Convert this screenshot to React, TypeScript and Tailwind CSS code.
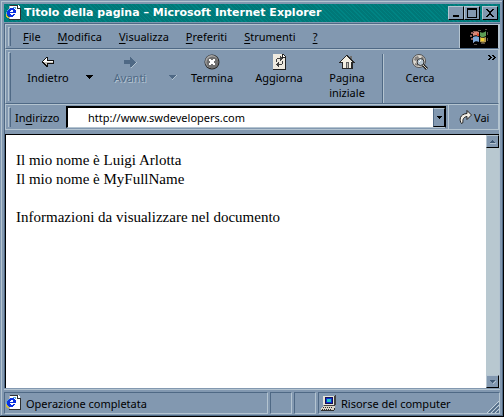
import React from 'react';

const menus = [
  { key: 'F', rest: 'ile' },
  { key: 'M', rest: 'odifica' },
  { key: 'V', rest: 'isualizza' },
  { key: 'P', rest: 'referiti' },
  { key: 'S', rest: 'trumenti' },
  { key: '?', rest: '' },
];

function PageIcon({ className = '' }: { className?: string }) {
  return (
    <svg width="16" height="16" viewBox="0 0 16 16" shapeRendering="crispEdges" className={`shrink-0 ${className}`} aria-hidden="true">
      <path d="M4 0h8l2 2v13H4z" fill="#fff" />
      <path d="M4 0h8v1H4zM11 1h1v2h3v1h-4zM14 3h1v12h-1zM3 14h12v1H3z" fill="#303030" />
      <path d="M3 1h1v3H3zM3 12h1v2H3z" fill="#b8b8b8" />
      <path d="M4 3h4v1h1v1h1v3H4v1h1v1h2V9h2v1H8v1H7v1H3v-1H2v-1H1V6h1V5h1V4h1zM5 5v1H4v1h3V5z" fill="#0a2fe0" />
      <path d="M7 2h3v2H9V3H7zM2 4h1v1H2zM1 5h1v1H1zM0 7h1v4H0z" fill="#58a8e0" />
      <path d="M0 9h1v2h1v1H0zM2 12h1v1H1v-1z" fill="#d8c030" />
    </svg>
  );
}

function ComputerIcon() {
  return (
    <svg width="16" height="16" viewBox="0 0 16 16" shapeRendering="crispEdges" className="shrink-0" aria-hidden="true">
      <path d="M3 1h10l1-1h1v9l-2 2H3z" fill="#404040" />
      <path d="M2 1h11v9H2z" fill="#e8e4d8" />
      <path d="M4 2h8v7H4z" fill="#101050" />
      <path d="M5 3h6v5H5z" fill="#1030d0" />
      <path d="M6 4h4v3H6z" fill="#20c8c0" />
      <path d="M2 11h12v2h-1v2H0v-2h1v-1h1z" fill="#d8d4c8" />
      <path d="M2 12h1v1H2zM4 12h1v1H4zM6 12h1v1H6zM8 12h1v1H8zM10 12h1v1h-1zM1 14h1v1H1zM3 14h1v1H3zM5 14h1v1H5zM7 14h1v1H7zM9 14h1v1H9zM0 15h13v1H0zM13 13h1v2h-1z" fill="#303030" />
    </svg>
  );
}

function BackIcon() {
  return (
    <svg width="16" height="16" viewBox="0 0 16 16" shapeRendering="crispEdges" aria-hidden="true">
      <path d="M2 7h1v-1h1V5h1V4h1V3h2v3h6v4H8v3H6v-1H5v-1H4v-1H3V9H2z" fill="#101010" />
      <path d="M3 7h1V6h1V5h1V4h1v3h6v1H3z" fill="#fff" />
      <path d="M4 8h9v1H7v2H6v-1H5V9H4z" fill="#c8c4bc" />
    </svg>
  );
}

function ForwardIcon() {
  return (
    <svg width="16" height="16" viewBox="0 0 16 16" shapeRendering="crispEdges" aria-hidden="true">
      <path d="M3 10h6v4h1v-1h1v-1h1v-1h1v-1h1V9h1V8h-1v1h-1v1h-1v1h-1v1h-1v-2H3z" fill="#b4c4d0" />
      <path d="M2 6h6V3h1v1h1v1h1v1h1v1h1v1h1v1h-1v1h-1v1h-1v1h-1v1H8v-3H2z" fill="#4f6985" />
    </svg>
  );
}

function StopIcon() {
  return (
    <svg width="16" height="16" viewBox="0 0 16 16" aria-hidden="true">
      <circle cx="8" cy="8" r="7.5" fill="#282828" />
      <circle cx="7.7" cy="7.7" r="6.6" fill="#a8a8a8" />
      <circle cx="8.4" cy="8.4" r="6" fill="#707070" />
      <path d="M5 5h2v1h2V5h2v2h-1v2h1v2H9v-1H7v1H5V9h1V7H5z" fill="#fff" shapeRendering="crispEdges" />
    </svg>
  );
}

function RefreshIcon() {
  return (
    <svg width="16" height="16" viewBox="0 0 16 16" shapeRendering="crispEdges" aria-hidden="true">
      <path d="M2 0h10l3 3v13H2z" fill="#202020" />
      <path d="M2 0h9v4h3v11H2z" fill="#eeeae0" />
      <path d="M12 1h1v1h1v1h-2z" fill="#fff" />
      <path d="M6 4h3V2h1v1h1v1h1v1h-1v1h-1v1H9V5H6v3H5V5h1zM11 7h1v3h-1v1H8v2H7v-1H6v-1H5v-1h1V9h1V8h1v2h3z" fill="#404040" />
    </svg>
  );
}

function HomeIcon() {
  return (
    <svg width="16" height="16" viewBox="0 0 16 16" shapeRendering="crispEdges" aria-hidden="true">
      <path d="M11 2h2v5h-2z" fill="#707070" />
      <path d="M7 1h2v1h1v1h1v1h1v1h1v1h1v1h1v1h1v1h-2v6H3V9H0V8h1V7h1V6h1V5h1V4h1V3h1V2h1z" fill="#282828" />
      <path d="M7 2h1v1h1v1h1v1h1v1h1v1h1v1h-1v6H4V8H2V7h1V6h1V5h1V4h1V3h1z" fill="#f4f0e4" />
      <path d="M7 8h3v6H7z" fill="#606060" />
      <path d="M8 9h1v5H8z" fill="#c8c4b8" />
    </svg>
  );
}

function SearchIcon() {
  return (
    <svg width="16" height="16" viewBox="0 0 16 16" aria-hidden="true">
      <circle cx="7" cy="7" r="6.5" fill="#dcd8d0" stroke="#505050" />
      <path d="M3 3l3-1 1 2-3 3-2-1zM10 2l2 2-1 2-2-2zM3 9l3 1v2l-3-1z" fill="#858280" />
      <path d="M11 11l4 4" stroke="#202020" strokeWidth="3" />
      <path d="M11 11l4 4" stroke="#d8d0c0" />
      <circle cx="8.5" cy="8" r="3.5" fill="#b4c4d0" stroke="#303030" />
      <path d="M7 8l2-2" stroke="#fff" />
    </svg>
  );
}

function GoIcon() {
  return (
    <svg width="14" height="16" viewBox="0 0 14 16" className="shrink-0" aria-hidden="true">
      <path d="M2.500 14.500C0 11.500.5 5 8 4.500v-3L12.500 6 8 10.500v-3C4.500 8 3.500 10.500 4 13.500z" fill="#f2eee6" stroke="#202020" />
    </svg>
  );
}

function WindowsFlag() {
  return (
    <svg width="20" height="18" viewBox="0 0 20 18" aria-hidden="true">
      <path d="M2 4h2v2H2zM1 7h2v2H1zM2 10h2v2H2zM4 3h2v1H4zM4 13h1v2H4z" fill="#8a5a54" />
      <path d="M4 5c2-2 4-2 6-1v4c-2-1-4-1-6 0z" fill="#d88878" />
      <path d="M8 5l2 1v2H8z" fill="#e04828" />
      <path d="M11 4c2 1 4 1 6-1v5c-2 1-4 2-6 0z" fill="#5c9c54" />
      <path d="M4 9c2-1 4-1 6 0v5c-2-1-4-1-6 1z" fill="#7ca8d8" />
      <path d="M11 9c2 1 4 1 6 0v5c-2 1-4 1-6 0z" fill="#b89c50" />
      <path d="M12 10h3v3h-3z" fill="#f0d030" />
      <path d="M16 1h2v1h-2zM18 4h1v3h-1zM18 10h1v3h-1zM9 2h3v1H9zM5 16h3v1H5zM12 15h4v1h-4z" fill="#5a5048" />
    </svg>
  );
}

function DownArrow({ muted = false }: { muted?: boolean }) {
  return (
    <svg width="8" height="8" viewBox="0 0 8 8" shapeRendering="crispEdges" aria-hidden="true">
      {muted && <path d="M7 2h1v1H7V4H6v1H5v1H4v1H3V6h1V5h1V4h1V3h1z" fill="#b4c4d0" />}
      <path d="M0 2h7v1H6v1H5v1H4v1H3V5H2V4H1V3H0z" fill={muted ? '#4f6985' : '#000'} />
    </svg>
  );
}

function Grip() {
  return <span className="mx-0.5 my-0.5 w-[3px] shrink-0 self-stretch border-t border-r border-l border-t-[#b4c4d0] border-r-[#4f6985] border-l-[#b4c4d0]" />;
}

type ToolProps = { label: string; icon: React.ReactNode; className: string; disabled?: boolean };

function ToolButton({ label, icon, className, disabled }: ToolProps) {
  return (
    <button
      type="button"
      disabled={disabled}
      className={`flex shrink-0 flex-col items-center leading-[15px] disabled:text-[#4f6985] disabled:[text-shadow:1px_1px_0_#b4c4d0] ${className}`}
    >
      {icon}
      <span>{label}</span>
    </button>
  );
}

const captionButton =
  'flex h-[14px] w-4 items-center justify-center border border-t-[#b4c4d0] border-r-black border-b-black border-l-[#b4c4d0] bg-[#8298b0]';

function TitleBar() {
  return (
    <header className="flex h-[18px] shrink-0 items-center bg-[#007878] bg-[repeating-linear-gradient(45deg,#008484_0_1px,transparent_1px_3px)] px-0.5 text-white">
      <PageIcon />
      <h1 className="ml-0.5 flex-1 truncate font-['DejaVu_Sans'] text-[11px] leading-4 font-bold">
        Titolo della pagina – Microsoft Internet Explorer
      </h1>
      <button type="button" aria-label="Riduci a icona" className={captionButton}>
        <svg width="10" height="10" shapeRendering="crispEdges"><path d="M2 7h6v2H2z" /></svg>
      </button>
      <button type="button" aria-label="Ingrandisci" className={captionButton}>
        <svg width="10" height="10" shapeRendering="crispEdges"><path d="M0 0h10v10H0zM1 2v7h8V2z" fillRule="evenodd" /></svg>
      </button>
      <button type="button" aria-label="Chiudi" className={`ml-0.5 ${captionButton}`}>
        <svg width="10" height="10" shapeRendering="crispEdges">
          <path d="M1 1h2v1h1v1h2V2h1V1h2v1H8v1H7v1H6v2h1v1h1v1h1v1H7V8H6V7H4v1H3v1H1V8h1V7h1V6h1V4H3V3H2V2H1z" />
        </svg>
      </button>
    </header>
  );
}

function MenuBar() {
  return (
    <div className="flex h-[25px] shrink-0 border border-t-[#b4c4d0] border-r-[#b4c4d0] border-b-[#4f6985] border-l-[#b4c4d0]">
      <Grip />
      <nav className="flex flex-1 items-center gap-[17px] pl-[10px]">
        {menus.map((m) => (
          <button key={m.key} type="button">
            <u className="underline-offset-2">{m.key}</u>
            {m.rest}
          </button>
        ))}
      </nav>
      <div className="flex w-[39px] items-center justify-center border-l border-[#b4c4d0] bg-black">
        <WindowsFlag />
      </div>
    </div>
  );
}

function ToolBar() {
  return (
    <div className="flex h-[55px] shrink-0 border border-t-[#b4c4d0] border-r-[#b4c4d0] border-b-[#4f6985] border-l-[#b4c4d0]">
      <Grip />
      <div className="flex min-w-0 flex-1 items-start pt-1 pl-[3px]">
        <ToolButton label="Indietro" icon={<BackIcon />} className="w-16" />
        <button type="button" aria-label="Cronologia indietro" className="flex w-5 shrink-0 justify-center pt-[19px]">
          <DownArrow />
        </button>
        <ToolButton label="Avanti" icon={<ForwardIcon />} className="w-[60px]" disabled />
        <button type="button" disabled aria-label="Cronologia avanti" className="flex w-[26px] shrink-0 justify-center pt-[19px]">
          <DownArrow muted />
        </button>
        <ToolButton label="Termina" icon={<StopIcon />} className="w-[52px]" />
        <ToolButton label="Aggiorna" icon={<RefreshIcon />} className="w-[82px]" />
        <ToolButton label="Pagina iniziale" icon={<HomeIcon />} className="w-[54px]" />
        <span className="mr-2 ml-2 h-[49px] w-0.5 shrink-0 border-r border-l border-r-[#b4c4d0] border-l-[#4f6985]" />
        <ToolButton label="Cerca" icon={<SearchIcon />} className="w-14" />
      </div>
      <button type="button" aria-label="Altri pulsanti" className="mr-0.5 self-start pt-[5px]">
        <svg width="8" height="6" shapeRendering="crispEdges">
          <path d="M0 0h2v1h1v1h1v1H3v1H2v1H0V4h1V3h1V2H1V1H0zM4 0h2v1h1v1h1v1H7v1H6v1H4V4h1V3h1V2H5V1H4z" />
        </svg>
      </button>
    </div>
  );
}

function AddressBar() {
  return (
    <form className="flex h-[26px] shrink-0 border border-[#b4c4d0]" onSubmit={(e) => e.preventDefault()}>
      <Grip />
      <label htmlFor="address" className="flex w-[53px] shrink-0 items-center pl-0.5 whitespace-pre">
        In<u className="underline-offset-2">d</u>irizzo
      </label>
      <div className="my-px flex min-w-0 flex-1 border-t-2 border-r border-b border-l-2 border-t-black border-r-black border-b-[#b4c4d0] border-l-black bg-white">
        <input id="address" type="text" defaultValue="http://www.swdevelopers.com" className="min-w-0 flex-1 bg-white pl-5 outline-none" />
        <button type="button" aria-label="Indirizzi recenti" className="flex w-3 items-center justify-center border border-t-[#b4c4d0] border-r-black border-b-black border-l-[#4f6985] bg-[#8298b0]">
          <svg width="5" height="3" shapeRendering="crispEdges"><path d="M0 0h5v1H4v1H3v1H2V2H1V1H0z" /></svg>
        </button>
      </div>
      <button type="submit" className="ml-0.5 flex w-[50px] items-center gap-px border-l border-[#b4c4d0] pl-2.5">
        <GoIcon />
        Vai
      </button>
    </form>
  );
}

const scrollButton =
  'flex h-[13px] shrink-0 items-center justify-center border border-t-[#b4c4d0] border-r-black border-b-black border-l-[#b4c4d0] bg-[#8298b0]';

function Document() {
  return (
    <div className="mt-1 flex min-h-0 flex-1 border-t border-l border-black bg-white">
      <main className="min-w-0 flex-1 px-2.5 pt-4 font-['Liberation_Serif',serif] text-[15px] leading-[19px]">
        <p>
          Il mio nome è Luigi Arlotta
          <br />
          Il mio nome è MyFullName
        </p>
        <p className="mt-[19px]">Informazioni da visualizzare nel documento</p>
      </main>
      <div className="flex w-[13px] flex-col justify-between bg-[#b8c8d0]">
        <button type="button" aria-label="Scorri su" className={scrollButton}>
          <svg width="7" height="4" shapeRendering="crispEdges"><path d="M3 0h1v1h1v1h1v1H1V2h1V1h1z" fill="#3f5873" /><path d="M1 3h6v1H1z" fill="#b4c4d0" /></svg>
        </button>
        <button type="button" aria-label="Scorri giù" className={scrollButton}>
          <svg width="7" height="4" shapeRendering="crispEdges"><path d="M1 0h5v1H5v1H4v1H3V2H2V1H1z" fill="#3f5873" /><path d="M6 1h1v1H6zM5 2h1v1H5zM4 3h1v1H4z" fill="#b4c4d0" /></svg>
        </button>
      </div>
    </div>
  );
}

const statusPane = 'flex items-center border border-t-[#4f6985] border-r-[#b4c4d0] border-b-[#b4c4d0] border-l-[#4f6985]';

function StatusBar() {
  return (
    <footer className="mt-px flex h-[25px] shrink-0 gap-0.5 border-t border-[#b4c4d0] pt-0.5">
      <div className={`min-w-0 flex-1 gap-1 pl-px ${statusPane}`}>
        <PageIcon />
        <span className="truncate">Operazione completata</span>
      </div>
      <div className={`w-[22px] ${statusPane}`} />
      <div className={`w-[22px] ${statusPane}`} />
      <div className={`w-[182px] gap-1 pl-0.5 ${statusPane}`}>
        <ComputerIcon />
        <span className="flex-1 truncate">Risorse del computer</span>
        <svg width="12" height="12" viewBox="0 0 12 12" className="self-end" aria-hidden="true">
          <path d="M0 12L12 0M4 12l8-8M8 12l4-4" stroke="#c4d2dc" />
          <path d="M2 12L12 2M6 12l6-6M10 12l2-2" stroke="#4f6985" strokeWidth="1.500" />
        </svg>
      </div>
    </footer>
  );
}

export default function App() {
  return (
    <div className="flex h-screen w-full flex-col border-r border-b border-black bg-[#8298b0] font-['Noto_Sans',sans-serif] text-[11px] leading-[15px] text-black">
      <div className="flex min-h-0 flex-1 flex-col border border-t-[#8298b0] border-r-[#4f6985] border-b-[#4f6985] border-l-[#8298b0]">
        <div className="flex min-h-0 flex-1 flex-col border-t border-l border-[#b4c4d0] px-0.5 pt-0.5 pb-px">
          <TitleBar />
          <div className="mt-px flex min-h-0 flex-1 flex-col border-t border-[#4f6985]">
            <div className="flex min-h-0 flex-1 flex-col border-r border-l border-r-[#b4c4d0] border-l-[#4f6985]">
              <MenuBar />
              <ToolBar />
              <AddressBar />
              <Document />
            </div>
            <StatusBar />
          </div>
        </div>
      </div>
    </div>
  );
}
